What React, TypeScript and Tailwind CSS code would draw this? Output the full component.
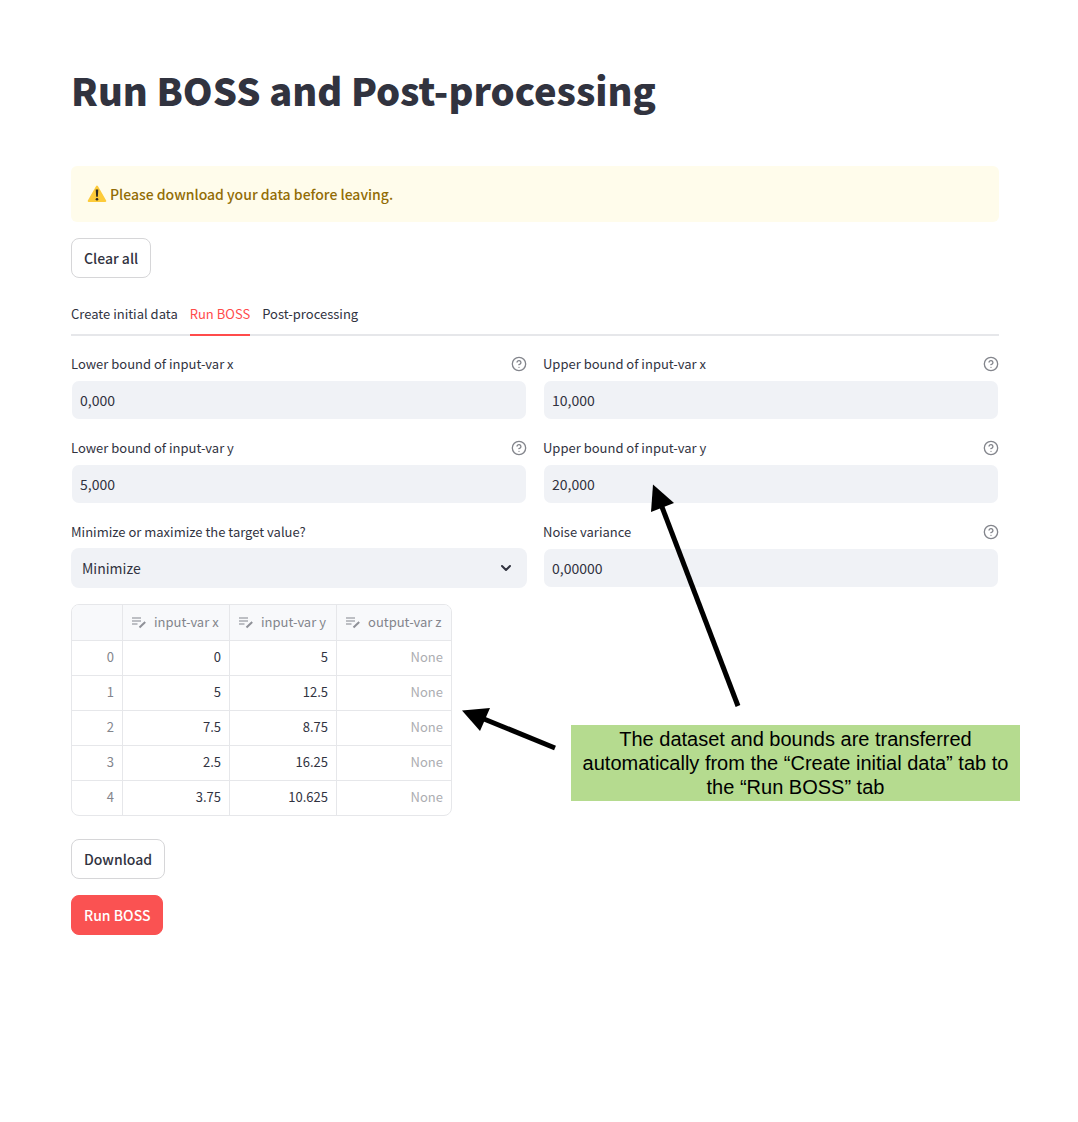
import React from "react";
import { ChevronDown, CircleHelp } from "lucide-react";

const rows = [
  ["0", "5"],
  ["5", "12.5"],
  ["7.5", "8.75"],
  ["2.5", "16.25"],
  ["3.75", "10.625"],
];

function Help() {
  return (
    <button type="button" aria-label="Help" className="text-[#83858c]">
      <CircleHelp size={16} strokeWidth={2} />
    </button>
  );
}

function NumberField({ id, label, value }: { id: string; label: string; value: string }) {
  return (
    <div>
      <div className="mb-1 flex h-6 items-center justify-between">
        <label htmlFor={id} className="text-[13px]">{label}</label>
        <Help />
      </div>
      <input
        id={id}
        type="text"
        inputMode="decimal"
        defaultValue={value}
        className="block h-10 w-full rounded-lg border border-transparent bg-[#f0f2f6] bg-clip-padding px-2 text-sm outline-none"
      />
    </div>
  );
}

function EditableIcon() {
  return (
    <svg width="16" height="16" viewBox="0 0 16 16" fill="none" aria-hidden="true" className="shrink-0">
      <path d="M1 4h9M1 7h9M1 10h5.500" stroke="#bdbfc4" strokeWidth="2" />
      <path d="M8.500 13.500 14.200 8" stroke="#8f9198" strokeWidth="2" />
    </svg>
  );
}

function ColumnHead({ title, last }: { title: string; last?: boolean }) {
  return (
    <th
      scope="col"
      className={
        last
          ? "border-b border-[#e6e7ea] p-0 pb-px pl-2 font-normal"
          : "border-r border-b border-[#e6e7ea] p-0 pb-px pl-2 font-normal"
      }
    >
      <span className="flex items-center gap-[7px] whitespace-nowrap">
        <EditableIcon />
        {title}
      </span>
    </th>
  );
}

function DataTable() {
  return (
    <div className="w-[381px] overflow-hidden rounded-lg border border-[#e6e7ea]">
      <table className="w-full table-fixed border-separate border-spacing-0 text-[13px]">
        <colgroup>
          <col className="w-[51px]" />
          <col className="w-[107px]" />
          <col className="w-[107px]" />
          <col />
        </colgroup>
        <thead>
          <tr className="h-9 bg-[#f8f9fb] text-left text-[#83858c]">
            <td className="border-r border-b border-[#e6e7ea]" />
            <ColumnHead title="input-var x" />
            <ColumnHead title="input-var y" />
            <ColumnHead title="output-var z" last />
          </tr>
        </thead>
        <tbody className="[&>tr:last-child]:h-[34px] [&>tr:last-child>*]:border-b-0">
          {rows.map(([x, y], i) => (
            <tr key={i} className="h-[35px] text-right">
              <th scope="row" className="border-r border-b border-[#e6e7ea] p-0 pr-2 pb-[2px] text-right font-normal text-[#83858c]">
                {i}
              </th>
              <td className="border-r border-b border-[#e6e7ea] p-0 pr-2 pb-[2px]">{x}</td>
              <td className="border-r border-b border-[#e6e7ea] p-0 pr-2 pb-[2px]">{y}</td>
              <td className="border-b border-[#e6e7ea] p-0 pr-2 pb-[2px] text-[#acadb1]">None</td>
            </tr>
          ))}
        </tbody>
      </table>
    </div>
  );
}

function WarningIcon() {
  return (
    <svg width="20" height="20" viewBox="0 0 20 20" aria-hidden="true" className="shrink-0">
      <path d="M10 2.6 18.3 17H1.7z" fill="#fdcb3a" stroke="#fdcb3a" strokeWidth="2" strokeLinejoin="round" />
      <path d="M8.7 5.600h2.600l-.5 7.200H9.200z" fill="#2f2b22" />
      <circle cx="10" cy="15.2" r="1.3" fill="#2f2b22" />
    </svg>
  );
}

function Annotations() {
  return (
    <>
      <svg
        width="300"
        height="290"
        viewBox="455 475 300 290"
        aria-hidden="true"
        className="pointer-events-none absolute top-[475px] left-[455px]"
      >
        <path d="M662 507 738 706" stroke="#000" strokeWidth="5" />
        <path d="M653 484.500 651 512 674 503z" />
        <path d="M484 719 555 748" stroke="#000" strokeWidth="5" />
        <path d="M462 710.500 490 708 480 731z" />
      </svg>
      <p className="absolute top-[725px] left-[571px] w-[449px] bg-[#b5db8f] px-2 py-[2px] text-center font-['Liberation_Sans',sans-serif] text-xl leading-6 text-black">
        The dataset and bounds are transferred automatically from the “Create initial data” tab to the “Run BOSS” tab
      </p>
    </>
  );
}

export default function App() {
  return (
    <div className="relative min-h-screen bg-white font-['Noto_Sans_CJK_SC','Noto_Sans',sans-serif] text-[#31333f]">
      <main className="flex flex-col items-start pt-16 pr-[79px] pb-24 pl-[71px]">
        <h1 className="text-[38px] leading-[52px] font-black">Run BOSS and Post-processing</h1>

        <div role="alert" className="mt-[50px] flex h-14 w-full items-center gap-[3px] rounded-md bg-[#fffceb] px-4 text-sm font-medium text-[#926c05]">
          <WarningIcon />
          Please download your data before leaving.
        </div>

        <button type="button" className="mt-4 h-10 rounded-lg border border-[#d6d6d8] px-3 text-sm font-medium">
          Clear all
        </button>

        <div role="tablist" className="mt-4 flex h-[42px] w-full gap-3 border-b-2 border-[#e6e7ea] text-[13px]">
          <button type="button" role="tab" aria-selected="false" className="-mb-[2px] border-b-2 border-transparent">
            Create initial data
          </button>
          <button type="button" role="tab" aria-selected="true" className="-mb-[2px] border-b-2 border-[#ff4b4b] text-[#ff4b4b]">
            Run BOSS
          </button>
          <button type="button" role="tab" aria-selected="false" className="-mb-[2px] border-b-2 border-transparent">
            Post-processing
          </button>
        </div>

        <div className="mt-4 grid w-full grid-cols-2 gap-4">
          <NumberField id="lower-x" label="Lower bound of input-var x" value="0,000" />
          <NumberField id="upper-x" label="Upper bound of input-var x" value="10,000" />
          <NumberField id="lower-y" label="Lower bound of input-var y" value="5,000" />
          <NumberField id="upper-y" label="Upper bound of input-var y" value="20,000" />
          <div>
            <div className="mb-1 flex h-6 items-center">
              <label htmlFor="goal" className="text-[13px]">Minimize or maximize the target value?</label>
            </div>
            <div className="relative">
              <select id="goal" className="block h-10 w-full appearance-none rounded-lg bg-[#f0f2f6] px-[11px] text-sm outline-none">
                <option>Minimize</option>
                <option>Maximize</option>
              </select>
              <ChevronDown size={16} strokeWidth={3} className="pointer-events-none absolute top-3 right-[13px]" />
            </div>
          </div>
          <NumberField id="noise" label="Noise variance" value="0,00000" />
        </div>

        <div className="mt-4">
          <DataTable />
        </div>

        <button type="button" className="mt-[23px] h-10 rounded-lg border border-[#d6d6d8] px-3 text-sm font-medium">
          Download
        </button>
        <button type="button" className="mt-4 h-10 rounded-lg border border-[#fa5252] bg-[#fa5252] px-3 text-sm font-medium text-white">
          Run BOSS
        </button>
      </main>
      <Annotations />
    </div>
  );
}
